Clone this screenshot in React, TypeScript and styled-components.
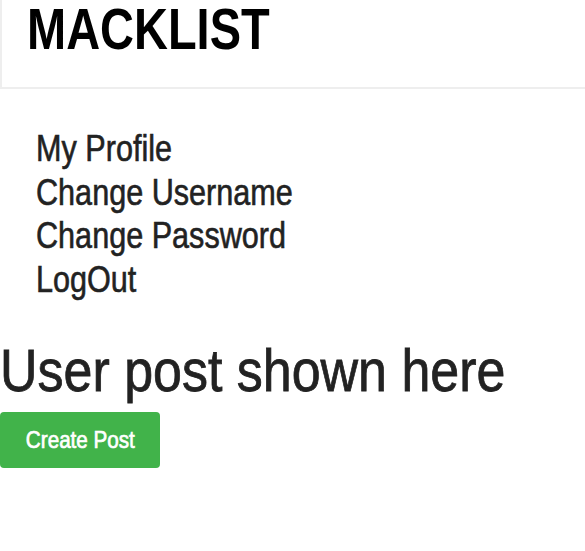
import React from "react";
import styled, { createGlobalStyle } from "styled-components";

const Global = createGlobalStyle`
  html, body { margin: 0; padding: 0; background: #fff; }
  body { font-family: "Liberation Sans", Arial, sans-serif; color: #222; }
`;

const Narrow = styled.span<{ $sx: number; $origin?: string; $stroke?: number }>`
  display: inline-block;
  white-space: nowrap;
  transform: scaleX(${(p) => p.$sx});
  transform-origin: ${(p) => p.$origin ?? "left center"};
  -webkit-text-stroke: ${(p) => p.$stroke ?? 0}px currentColor;
`;

const Header = styled.header`
  border-left: 2px solid #eeeeee;
  border-bottom: 2px solid #eeeeee;
  height: 87px;
  box-sizing: content-box;
  padding-left: 25px;
`;

const Logo = styled.h1`
  margin: 0;
  font-family: "Liberation Sans", Arial, sans-serif;
  font-weight: 700;
  font-size: 58px;
  line-height: 58px;
  color: #000;
  white-space: nowrap;
`;

const Nav = styled.ul`
  list-style: none;
  margin: 0;
  padding: 38px 0 0 36px;
`;

const NavItem = styled.li`
  font-size: 36px;
  line-height: 43.5px;
  color: #222;
  white-space: nowrap;
`;

const Title = styled.h2`
  margin: 35px 0 0 0;
  font-weight: 400;
  font-size: 60px;
  line-height: 70px;
  color: #222;
  white-space: nowrap;
`;

const Button = styled.button`
  display: block;
  width: 160px;
  height: 56px;
  margin-top: 6px;
  border: none;
  border-radius: 4px;
  background: #41b34a;
  color: #fff;
  font-family: "Liberation Sans", Arial, sans-serif;
  font-size: 24px;
  padding: 0;
  cursor: pointer;
`;

const links = ["My Profile", "Change Username", "Change Password", "LogOut"];

export default function App() {
  return (
    <>
      <Global />
      <Header>
        <Logo>
          <Narrow $sx={0.81}>MACKLIST</Narrow>
        </Logo>
      </Header>
      <Nav>
        {links.map((l) => (
          <NavItem key={l}>
            <Narrow $sx={0.85} $stroke={0.6}>{l}</Narrow>
          </NavItem>
        ))}
      </Nav>
      <Title>
        <Narrow $sx={0.866} $stroke={0.8}>User post shown here</Narrow>
      </Title>
      <Button>
        <Narrow $sx={0.86} $origin="center" $stroke={0.7}>Create Post</Narrow>
      </Button>
    </>
  );
}
